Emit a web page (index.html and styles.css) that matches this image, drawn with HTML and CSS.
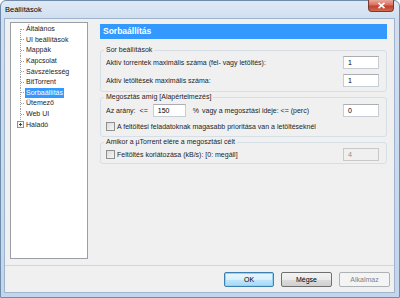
FILE: index.html
```html
<!DOCTYPE html>
<html lang="hu">
<head>
<meta charset="utf-8">
<title>Beállítások</title>
<link rel="stylesheet" href="styles.css">
</head>
<body>
<div class="window">
  <div class="titlebar">
    <span class="title">Beállítások</span>
    <span class="close"><svg width="9" height="7" viewBox="0 0 9 7"><path d="M1.5 0.8 L7.5 6.2 M7.5 0.8 L1.5 6.2" stroke="#fff" stroke-width="1.6"/></svg></span>
  </div>
  <div class="client">
    <div class="main">
      <div class="tree">
        <div class="item first"><span class="branch"></span><span class="label">Általános</span></div>
        <div class="item"><span class="branch"></span><span class="label">UI beállítások</span></div>
        <div class="item"><span class="branch"></span><span class="label">Mappák</span></div>
        <div class="item"><span class="branch"></span><span class="label">Kapcsolat</span></div>
        <div class="item"><span class="branch"></span><span class="label">Sávszélesség</span></div>
        <div class="item"><span class="branch"></span><span class="label">BitTorrent</span></div>
        <div class="item"><span class="branch"></span><span class="label selected">Sorbaállítás</span></div>
        <div class="item"><span class="branch"></span><span class="label">Ütemező</span></div>
        <div class="item"><span class="branch"></span><span class="label">Web UI</span></div>
        <div class="item last"><span class="branch"><span class="plus"></span></span><span class="label">Haladó</span></div>
      </div>
      <div class="panel">
        <div class="panel-head">Sorbaállítás</div>
        <fieldset class="group g1">
          <legend>Sor beállítások</legend>
          <div class="row"><span class="grow">Aktív torrentek maximális száma (fel- vagy letöltés):</span><span class="input">1</span></div>
          <div class="row gap5"><span class="grow">Aktív letöltések maximális száma:</span><span class="input">1</span></div>
        </fieldset>
        <fieldset class="group g2">
          <legend>Megosztás amíg [Alapértelmezés]</legend>
          <div class="row">
            <span>Az arány:</span><span class="le">&lt;=</span><span class="input small">150</span><span class="pct">%</span><span class="grow">vagy a megosztási ideje: &lt;= (perc)</span><span class="input">0</span>
          </div>
          <div class="row gap3"><span class="check"></span><span>A feltöltési feladatoknak magasabb prioritása van a letöltéseknél</span></div>
        </fieldset>
        <fieldset class="group g3">
          <legend>Amikor a µTorrent elére a megosztási célt</legend>
          <div class="row"><span class="check"></span><span class="grow">Feltöltés korlátozása (kB/s): [0: megáll]</span><span class="input disabled">4</span></div>
        </fieldset>
      </div>
    </div>
    <div class="footer">
      <span class="btn default">OK</span>
      <span class="btn">Mégse</span>
      <span class="btn disabled">Alkalmaz</span>
    </div>
  </div>
</div>
</body>
</html>
```
FILE: styles.css
```css
html, body {
  margin: 0;
  padding: 0;
}
body {
  width: 400px;
  height: 298px;
  overflow: hidden;
  font-family: "Liberation Sans", Arial, sans-serif;
  font-size: 7px;
  color: #1e1e1e;
  background: #ffffff;
}
.window {
  width: 400px;
  height: 298px;
  box-sizing: border-box;
  border: 1px solid #6f8cab;
  border-radius: 6px 6px 0 0;
  background: linear-gradient(to bottom, #dfe9f5 0px, #cfdff0 18px, #c2d6ec 100%);
  display: flex;
  flex-direction: column;
}
.titlebar {
  height: 17px;
  display: flex;
  justify-content: space-between;
  align-items: flex-start;
  padding-left: 4px;
  flex: none;
}
.title {
  margin-top: 4px;
  font-size: 7.5px;
  color: #000;
}
.close {
  width: 26px;
  height: 12px;
  margin-right: 5px;
  margin-top: -1px;
  box-sizing: border-box;
  border: 1px solid #7a3a34;
  border-top: none;
  border-radius: 0 0 4px 4px;
  background: linear-gradient(to bottom, #e8a99c 0%, #d7705f 45%, #c2402c 55%, #d16a4e 100%);
  display: flex;
  align-items: center;
  justify-content: center;
}
.client {
  flex: 1;
  margin: 0 4px 4px 3px;
  border: 1px solid #9fb4cc;
  background: #f0f0f0;
  display: flex;
  flex-direction: column;
}
.main {
  height: 246px;
  display: flex;
  padding: 3px 0 0 5px;
  box-sizing: border-box;
}
.tree {
  width: 78px;
  height: 237px;
  box-sizing: border-box;
  border: 1px solid #9a9ea6;
  background: #fff;
  padding: 1px 0 0 3px;
}
.item {
  height: 10.6px;
  display: flex;
  align-items: center;
}
.branch {
  width: 11px;
  height: 100%;
  flex: none;
  background-image:
    repeating-linear-gradient(to bottom, #a0a0a0 0 1px, transparent 1px 2px),
    repeating-linear-gradient(to right, #a0a0a0 0 1px, transparent 1px 2px);
  background-size: 1px 100%, 4px 1px;
  background-position: 6px 0, 7px 50%;
  background-repeat: no-repeat;
  display: flex;
  align-items: center;
}
.item.first .branch {
  background-size: 1px 50%, 4px 1px;
  background-position: 6px 100%, 7px 50%;
}
.item.last .branch {
  background-size: 1px 50%, 4px 1px;
  background-position: 6px 0, 7px 50%;
}
.plus {
  width: 7px;
  height: 7px;
  margin-left: 3px;
  box-sizing: border-box;
  border: 1px solid #919191;
  background:
    linear-gradient(#444, #444) center / 3px 1px no-repeat,
    linear-gradient(#444, #444) center / 1px 3px no-repeat,
    #f7f7f7;
}
.label {
  padding: 0 1px;
  line-height: 10px;
  white-space: nowrap;
}
.label.selected {
  background: #3399ff;
  color: #fff;
}
.panel {
  margin-left: 12px;
  margin-top: 2px;
  width: 287px;
  display: flex;
  flex-direction: column;
}
.panel-head {
  height: 15px;
  background: #3399ff;
  color: #fff;
  font-weight: bold;
  font-size: 8.5px;
  line-height: 15px;
  padding-left: 3px;
}
.group {
  margin: 0;
  min-width: 0;
  border: 1px solid #d5dfe5;
  border-radius: 3px;
  padding: 0 7px 0 5px;
}
.group legend {
  padding: 0 2px;
  margin-left: -2px;
  line-height: 10px;
  font-size: 7px;
}
.g1 {
  margin-top: 6px;
  padding-top: 1px;
  padding-bottom: 4px;
}
.g2 {
  padding-top: 2px;
  padding-bottom: 3px;
}
.g3 {
  padding-top: 1px;
  padding-bottom: 2px;
}
.row {
  height: 13px;
  display: flex;
  align-items: center;
  white-space: nowrap;
}
.gap5 { margin-top: 5px; }
.gap3 { margin-top: 3px; }
.grow { flex: 1; }
.input {
  width: 36px;
  height: 13px;
  box-sizing: border-box;
  border: 1px solid #c5cdd6;
  border-top-color: #abadb3;
  background: #fff;
  padding-left: 4px;
  line-height: 11px;
  color: #000;
}
.input.small {
  width: 33px;
  margin-left: 5px;
}
.input.disabled {
  background: #f0f0f0;
  border-color: #c9c9c9;
  color: #8d8d8d;
}
.le { margin-left: 4px; }
.pct { margin-left: 7px; margin-right: 3px; }
.check {
  width: 9px;
  height: 9px;
  box-sizing: border-box;
  border: 1px solid #8e8f8f;
  background: linear-gradient(135deg, #dcdcdc, #f6f6f6);
  margin-right: 2px;
  flex: none;
}
.footer {
  flex: 1;
  border-top: 1px solid #d5d5d5;
  display: flex;
  justify-content: flex-end;
  align-items: flex-start;
  gap: 7px;
  padding: 6px 4px 0 0;
}
.btn {
  width: 51px;
  height: 15px;
  box-sizing: border-box;
  border: 1px solid #707070;
  border-radius: 2px;
  background: linear-gradient(to bottom, #f2f2f2 0%, #ebebeb 50%, #dddddd 51%, #cfcfcf 100%);
  display: flex;
  align-items: center;
  justify-content: center;
  color: #000;
}
.btn.default {
  width: 50px;
  border-color: #3c7fb1;
  background: linear-gradient(to bottom, #eaf6fd 0%, #d9f0fc 50%, #bee6fd 51%, #a7d9f5 100%);
  box-shadow: inset 0 0 0 1px #94d2f2;
}
.btn.disabled {
  border-color: #adb2b5;
  background: #f4f4f4;
  color: #838383;
}
```
